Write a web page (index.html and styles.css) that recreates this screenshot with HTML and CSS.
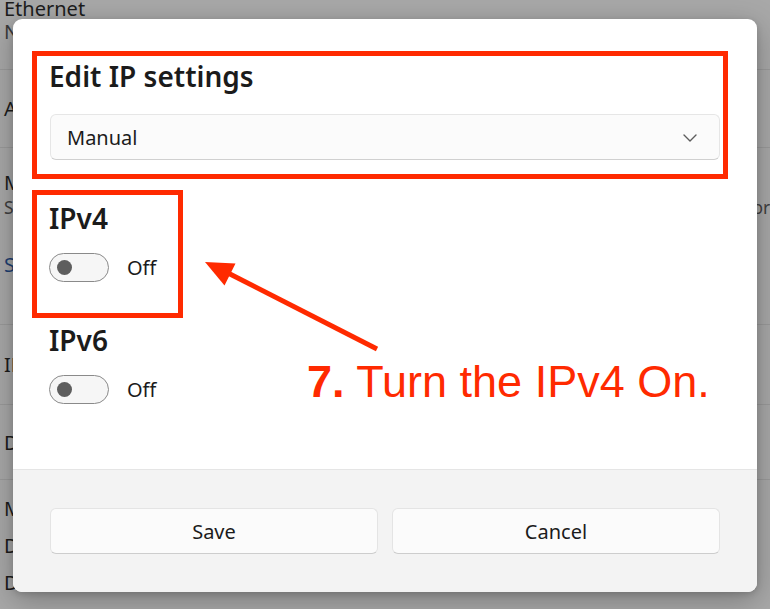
FILE: index.html
```html
<!DOCTYPE html>
<html>
<head>
<meta charset="utf-8">
<link rel="stylesheet" href="styles.css">
</head>
<body>
<div class="page">
  <div class="row head">
    <div class="h-title">Ethernet</div>
    <div class="h-sub">Network 3</div>
  </div>
  <div class="row r-a"><span>Authentication settings</span></div>
  <div class="row r-m">
    <div class="t">Metered connection</div>
    <div class="sub">Some apps might work differently to reduce data usage when you're connected to this netw<span class="tail">ork</span></div>
    <div class="link">Set a data limit to help control data usage on this network</div>
  </div>
  <div class="row r-ip"><span>IP assignment:</span></div>
  <div class="row r-d"><span>DNS server assignment:</span></div>
  <div class="row r-last">
    <div>Manufacturer:</div>
    <div>Description:</div>
    <div>Driver:</div>
  </div>
</div>

<div class="dialog">
  <div class="dialog-body">
    <h1 class="title">Edit IP settings</h1>
    <div class="select">
      <span>Manual</span>
      <svg class="chev" width="14" height="8" viewBox="0 0 14 8"><path d="M1 1 L7 7 L13 1" fill="none" stroke="#5c5c5c" stroke-width="1.4" stroke-linecap="round" stroke-linejoin="round"/></svg>
    </div>
    <h2 class="sect">IPv4</h2>
    <div class="toggle-row"><span class="toggle"><span class="knob"></span></span><span class="state">Off</span></div>
    <h2 class="sect">IPv6</h2>
    <div class="toggle-row"><span class="toggle"><span class="knob"></span></span><span class="state">Off</span></div>
  </div>
  <div class="footer">
    <button class="btn">Save</button>
    <button class="btn">Cancel</button>
  </div>
</div>

<div class="mark box1"></div>
<div class="mark box2"></div>
<svg class="arrow" width="770" height="609" viewBox="0 0 770 609">
  <line x1="377" y1="349" x2="226" y2="272" stroke="#ff2a00" stroke-width="5"/>
  <polygon points="205,262 235.5,263.5 224.5,285.5" fill="#ff2a00"/>
</svg>
<div class="note"><b>7.</b> Turn the IPv4 On.</div>
</body>
</html>
```

FILE: styles.css
```css
* { box-sizing: border-box; }
html, body { margin: 0; padding: 0; }
body {
  width: 770px;
  height: 609px;
  overflow: hidden;
  background: #a8a8a8;
  font-family: "Noto Sans", "Open Sans", sans-serif;
  color: #1c1c1c;
  position: relative;
}
.page { width: 770px; }
.row {
  border-bottom: 1px solid #9a9a9a;
  padding-left: 4px;
  font-size: 20px;
  white-space: nowrap;
  overflow: hidden;
}
.head { height: 70px; }
.h-title { line-height: 18px; }
.h-sub { line-height: 22px; color: #3a3a3a; margin-top: 3px; }
.r-a { height: 78px; display: flex; align-items: center; }
.r-m { height: 177px; padding-top: 22px; }
.r-m .t { line-height: 26px; }
.r-m .sub { font-size: 17.4px; line-height: 22px; color: #404040; }
.r-m .link { color: #1d3f72; line-height: 26px; margin-top: 34px; }
.r-ip { height: 80px; display: flex; align-items: center; }
.r-d { height: 75px; display: flex; align-items: center; }
.r-last { border-bottom: none; padding-top: 10px; }
.r-last div { line-height: 37px; }

.dialog {
  position: absolute;
  left: 13px;
  top: 19px;
  width: 744px;
  height: 573px;
  border-radius: 9px;
  overflow: hidden;
  background: #ffffff;
  box-shadow: 0 8px 30px rgba(0,0,0,0.28), 0 2px 6px rgba(0,0,0,0.15);
  display: flex;
  flex-direction: column;
}
.dialog-body {
  height: 450px;
  padding: 38px 37px 0 36px;
  display: flex;
  flex-direction: column;
  align-items: flex-start;
}
.title, .sect {
  margin: 0;
  font-size: 28px;
  font-weight: 600;
  line-height: 38px;
  color: #1b1b1b;
}
.select {
  margin-top: 19px;
  align-self: stretch;
  margin-left: 1px;
  height: 46px;
  border: 1px solid #e6e6e6;
  border-bottom-color: #d0d0d0;
  border-radius: 6px;
  background: #fbfbfb;
  display: flex;
  align-items: center;
  justify-content: space-between;
  padding: 0 22px 0 16px;
  font-size: 20px;
  color: #1b1b1b;
}
.chev { margin-top: 2px; }
.sect { margin-top: 39px; }
.toggle-row {
  margin-top: 16px;
  display: flex;
  align-items: center;
  gap: 18px;
}
.toggle {
  width: 60px;
  height: 29px;
  border: 1.5px solid #8a8a8a;
  border-radius: 15px;
  background: #f6f6f6;
  display: flex;
  align-items: center;
  padding-left: 6.5px;
}
.knob {
  width: 15px;
  height: 15px;
  border-radius: 50%;
  background: #5e5e5e;
}
.state { font-size: 20px; color: #1b1b1b; line-height: 29px; }

.footer {
  flex: 1;
  background: #f3f3f3;
  border-top: 1px solid #e5e5e5;
  padding: 38px 37px 0 37px;
  display: grid;
  grid-template-columns: 1fr 1fr;
  column-gap: 14px;
  align-items: start;
}
.btn {
  height: 46px;
  border: 1px solid #e4e4e4;
  border-bottom-color: #cdcdcd;
  border-radius: 6px;
  background: #fbfbfb;
  font-family: "Noto Sans", "Open Sans", sans-serif;
  font-size: 20px;
  color: #1b1b1b;
}

.mark {
  position: absolute;
  border: 5px solid #ff2a00;
}
.box1 { left: 32px; top: 51px; width: 696px; height: 128px; }
.box2 { left: 32px; top: 190px; width: 151px; height: 128px; }
.arrow { position: absolute; left: 0; top: 0; }
.note {
  position: absolute;
  left: 307px;
  top: 357px;
  font-family: "Liberation Sans", Arial, sans-serif;
  font-size: 45px;
  line-height: 50px;
  color: #ff2a00;
  white-space: nowrap;
}
.note b { font-weight: 700; }
```
